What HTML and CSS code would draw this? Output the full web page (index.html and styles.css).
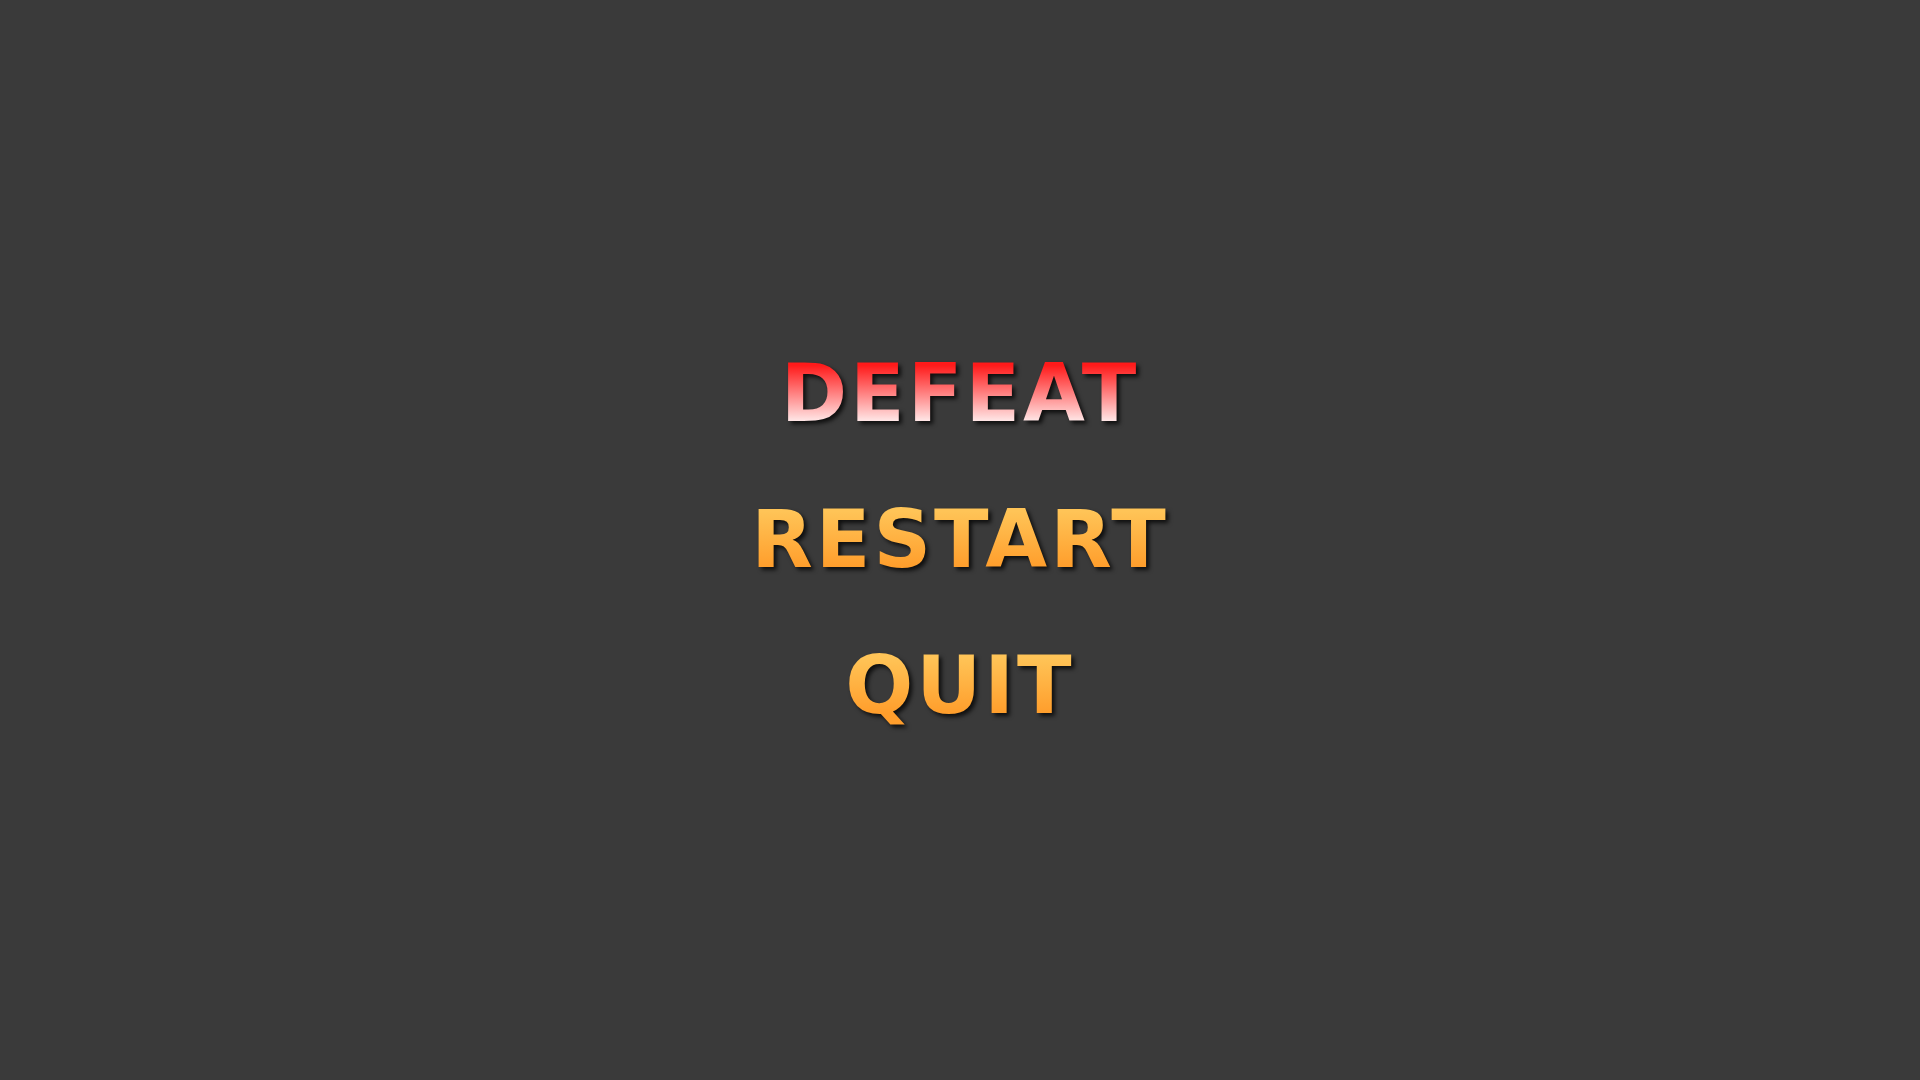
FILE: index.html
```html
<!DOCTYPE html>
<html>
<head>
    <meta charset="utf-8">
    <title>Defeat</title>
    <link rel="stylesheet" href="styles.css">
</head>
<body>
    <div class="menu">
        <div class="title">DEFEAT</div>
        <div class="option">RESTART</div>
        <div class="option">QUIT</div>
    </div>
</body>
</html>
```

FILE: styles.css
```css
html, body {
    margin: 0;
    height: 100%;
}

body {
    background: #3a3a3a;
    font-family: "DejaVu Sans", Verdana, sans-serif;
    display: flex;
    justify-content: center;
    align-items: center;
}

.menu {
    display: flex;
    flex-direction: column;
    align-items: center;
    gap: 50px;
}

.title, .option {
    font-size: 80px;
    font-weight: bold;
    line-height: 1.2;
    letter-spacing: 3px;
    -webkit-background-clip: text;
    background-clip: text;
    color: transparent;
    filter: drop-shadow(3px 3px 2px rgba(0, 0, 0, 0.75));
    cursor: default;
}

.title {
    background-image: linear-gradient(to bottom, #ff1a1a 20%, #ffe6e6 78%);
}

.option {
    background-image: linear-gradient(to bottom, #ffc457 20%, #ff9e2c 78%);
}
```
